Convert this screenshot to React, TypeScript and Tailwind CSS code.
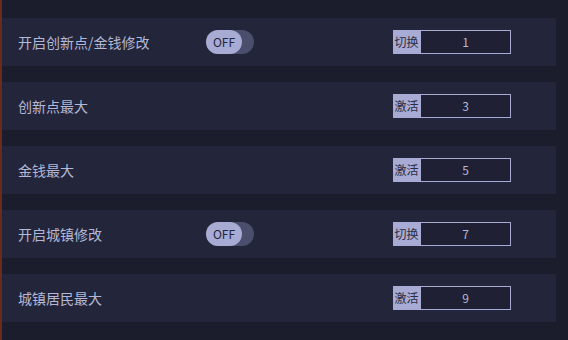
import React from "react";

const rows = [
  { label: "开启创新点/金钱修改", toggle: true, action: "切换", value: "1" },
  { label: "创新点最大", toggle: false, action: "激活", value: "3" },
  { label: "金钱最大", toggle: false, action: "激活", value: "5" },
  { label: "开启城镇修改", toggle: true, action: "切换", value: "7" },
  { label: "城镇居民最大", toggle: false, action: "激活", value: "9" },
];

function Toggle() {
  return (
    <div className="flex h-[24px] w-[48px] items-center rounded-full bg-[#4b4e6c]">
      <div className="flex h-[24px] w-[36px] items-center justify-center rounded-full bg-[#a8acd4] text-[12px] text-[#23253a]">
        OFF
      </div>
    </div>
  );
}

export default function App() {
  return (
    <div
      className="flex h-[340px] w-[568px] flex-col gap-4 overflow-hidden border-l-2 border-[#6a2a1e] bg-[#1b1c2c] pt-[18px] pr-[12px]"
      style={{ fontFamily: '"Noto Sans CJK SC", "Noto Sans", sans-serif' }}
    >
      {rows.map((row, i) => (
        <div
          key={i}
          className="flex h-[48px] shrink-0 items-center bg-[#23253a] pl-[16px]"
        >
          <span className="w-[188px] text-[14px] text-[#b4b8d6]">{row.label}</span>
          <div className="w-[187px]">{row.toggle && <Toggle />}</div>
          <div className="flex h-[24px] items-stretch">
            <div className="flex w-[27px] items-center justify-center bg-[#a8acd4] text-[12px] text-[#2b2d45]">
              {row.action}
            </div>
            <div className="flex w-[91px] items-center justify-center border border-[#a8acd4] bg-[#1f2033] text-[12px] text-[#b4b8d6]">
              {row.value}
            </div>
          </div>
        </div>
      ))}
    </div>
  );
}
